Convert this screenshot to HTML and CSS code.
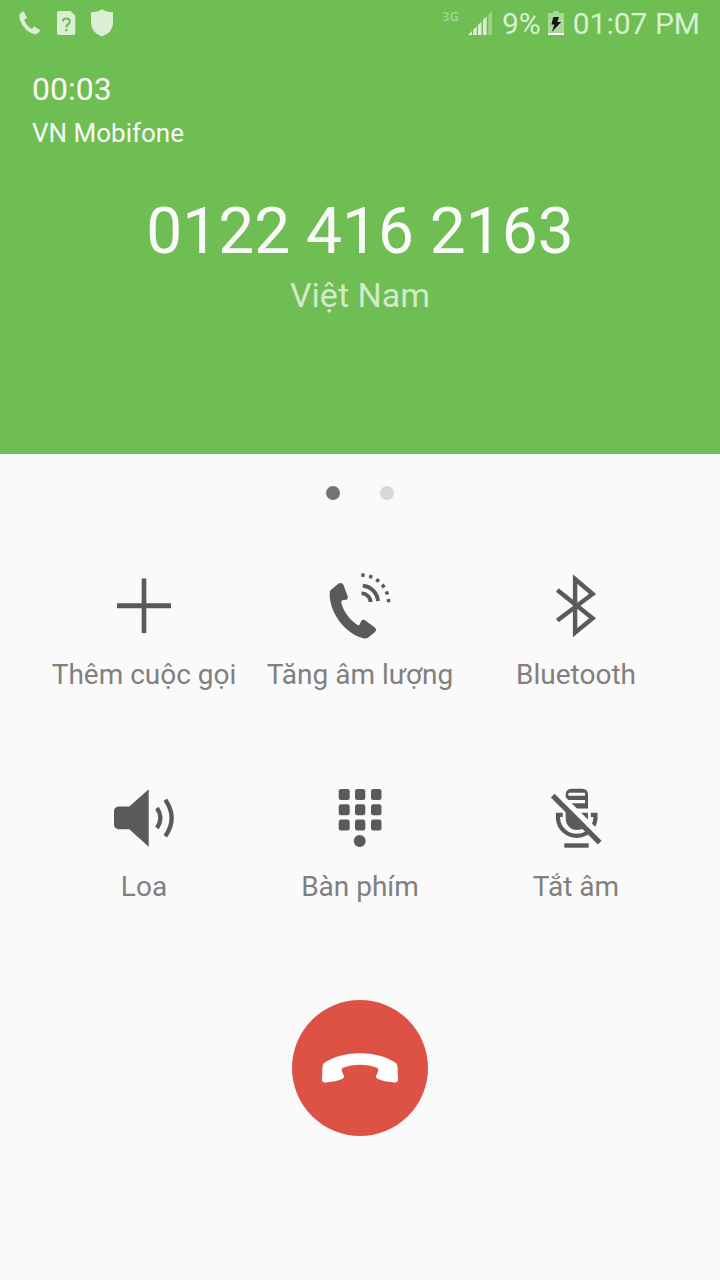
FILE: index.html
```html
<!DOCTYPE html>
<html lang="vi">
<head>
<meta charset="utf-8">
<title>VN Mobifone</title>
<link rel="stylesheet" href="styles.css">
</head>
<body>
<header class="call-header">
  <div class="status-bar">
    <div class="status-left">
      <svg class="ic-call" width="22" height="24" viewBox="0 0 22 24"><path d="M4.7 .3L8 6.7 5.2 8.7Q7 14.3 12.7 18L15.2 15.6 21.4 19.3Q18.5 23.5 15.5 23.3C7.5 21.5-.2 12 .3 3.5Q2 1 4.7.3Z"/></svg>
      <svg class="ic-sim" width="19" height="24" viewBox="0 0 19 24"><path d="M2 0H13.5L18.3 4.6V22Q18.3 24 16.3 24H2Q0 24 0 22V2Q0 0 2 0Z"/><path class="question" d="M5.8 10.5Q5.8 7.5 9.3 7.5T12.8 10.6C12.8 13 9.3 13.4 9.3 16.5M9.3 18V20.3"/></svg>
      <svg class="ic-shield" width="22" height="28" viewBox="0 0 22 28"><path d="M11 .3Q15 3.2 22 3.3V14Q22 23.5 11 27.6 0 23.5 0 14V3.3Q7 3.2 11 .3Z"/></svg>
    </div>
    <div class="status-right">
      <span class="network">3G</span>
      <svg class="ic-signal" width="24" height="24" viewBox="0 0 24 24"><path d="M0 24L4 20V24ZM5.2 18.8L8.8 15.2V24H5.2ZM10 14L13.5 10.5V24H10ZM15 9L18.6 5.4V24H15Z"/><path opacity=".4" d="M20.2 3.8L24 0V24H20.2Z"/></svg>
      <span class="percent">9%</span>
      <svg class="ic-battery" width="16" height="24" viewBox="0 0 16 24"><path opacity=".55" d="M5.3 0H10.7V2H16V22H0V2H5.3Z"/><path class="level" d="M0 22H16V24H0Z"/><path class="bolt" d="M5.3 6H11L9.3 11H13.2L3.8 21 6.4 13.5H3.4Z"/></svg>
      <span class="clock">01:07 PM</span>
    </div>
  </div>
  <div class="call-info">
    <div class="timer">00:03</div>
    <div class="carrier">VN Mobifone</div>
  </div>
  <div class="number">0122 416 2163</div>
  <div class="country">Việt Nam</div>
</header>
<main class="panel">
  <div class="pager"><span class="dot dot-active"></span><span class="dot"></span></div>
  <div class="actions">
    <button class="action">
      <svg class="icon" viewBox="0 0 96 96"><path d="M45.7 18.6H50.3V73H45.7ZM21 43.2H75V48.3H21Z"/></svg>
      <span>Thêm cuộc gọi</span>
    </button>
    <button class="action">
      <svg class="icon" viewBox="0 0 96 96"><path d="M26.5 23.6Q29.8 21.8 31.4 24.8L35.6 36.2Q36.5 39 34.2 39.7L30.5 40.2Q28.6 40.8 29.3 42.8C31.5 51 37 59.5 45.5 65Q47 66 47.8 64.2L49.2 61Q50.6 59 52.6 60L62.6 67.3Q65.3 69.7 63 72L56 77.8Q53.8 79.2 50.5 78C34 74 17 53 17.7 33Q17.7 31 18.8 30Z"/><g class="line"><path stroke-width="3.9" d="M49.5 33.4A8.8 8.8 0 0 1 58.6 42M50.8 25.8A16.5 16.5 0 0 1 66 41"/><path stroke-width="3.6" stroke-dasharray="3.4 4.5" d="M49.3 15A27.3 27.3 0 0 1 76.6 42.3"/></g></svg>
      <span>Tăng âm lượng</span>
    </button>
    <button class="action">
      <svg class="icon" viewBox="0 0 96 96"><path class="line" stroke-width="4.4" d="M29.3 30L64.6 58.3 47.1 72.6V19L64.6 34 29.3 60.5"/></svg>
      <span>Bluetooth</span>
    </button>
    <button class="action">
      <svg class="icon" viewBox="0 0 96 96"><path d="M22 34.5H33.3L52.7 17.3V74.7L33.3 57.3H22Q18 56.3 18 52.5V39.3Q18 35.5 22 34.5Z"/><path class="line" stroke-width="4.3" d="M61 36Q67.8 46 61 56M69.3 27.8Q82 46 69.3 64.2"/></svg>
      <span>Loa</span>
    </button>
    <button class="action">
      <svg class="icon" viewBox="0 0 96 96"><g><rect x="26.7" y="17" width="11" height="11" rx="2.3"/><rect x="43" y="17" width="10.3" height="11" rx="2.3"/><rect x="59" y="17" width="10.5" height="11" rx="2.3"/><rect x="26.7" y="32.2" width="11" height="11" rx="2.3"/><rect x="43" y="32.2" width="10.3" height="11" rx="2.3"/><rect x="59" y="32.2" width="10.5" height="11" rx="2.3"/><rect x="26.7" y="47.6" width="11" height="11" rx="2.3"/><rect x="43" y="47.6" width="10.3" height="11" rx="2.3"/><rect x="59" y="47.6" width="10.5" height="11" rx="2.3"/></g><circle cx="47.7" cy="69" r="6"/></svg>
      <span>Bàn phím</span>
    </button>
    <button class="action">
      <svg class="icon" viewBox="0 0 96 96"><path d="M37.7 22.7Q37.7 16.7 43.7 16.7H54Q60 16.7 60 22.7V36.5H37.7ZM37.7 36.3H46V40.7H60V46.8A11.15 11.15 0 0 1 37.7 46.8Z"/><path class="cut" d="M41.3 20.7H57V23.7H40.3V21.7ZM40.3 28H57V31.3H40.3Z"/><path class="line" stroke-width="4.2" d="M34.7 42.8H30V47A18.8 18.8 0 0 0 67.4 47V42.8H62.8"/><path d="M36.3 71.3H60.7V75.7H36.3Z"/><path class="gap" d="M28.4 20L75.4 67"/><path class="line" stroke-width="5.2" d="M24.7 23.7L71.7 70.7"/></svg>
      <span>Tắt âm</span>
    </button>
  </div>
  <button class="end-call" aria-label="Kết thúc">
    <svg width="136" height="136" viewBox="0 0 136 136"><path d="M68 53.2C82 53.2 94 56.5 104 63Q105.3 64 105.5 67L106 79Q106 82.8 102.5 82.5C97 82.3 91.5 81 86.5 79.3Q83.5 78 84 76L86.3 71Q87 68.5 85 67.7C75 63.8 61 63.8 51 67.7Q49 68.5 49.7 71L52 76Q52.5 78 49.5 79.3C44.5 81 39 82.3 33.5 82.5Q30 82.8 30 79L30.5 67Q30.7 64 32 63C42 56.5 54 53.2 68 53.2Z"/></svg>
  </button>
</main>
</body>
</html>
```

FILE: styles.css
```css
* { box-sizing: border-box; }
body {
  margin: 0;
  width: 720px;
  height: 1280px;
  background: #fafafa;
  font-family: Roboto, "Noto Sans", sans-serif;
  overflow: hidden;
}
svg { display: block; flex: none; }
button { border: 0; padding: 0; background: none; font: inherit; }

.call-header { height: 454px; background: #6ebe53; color: #fafafa; }
.status-bar {
  display: flex;
  justify-content: space-between;
  height: 48px;
  padding: 0 20px 0 19px;
  color: #dbefd5;
  fill: #dbefd5;
  font-size: 30px;
  line-height: 48px;
}
.status-left, .status-right { display: flex; align-items: flex-start; }
.ic-call { margin-top: 11px; }
.ic-sim { margin: 11px 0 0 16px; }
.question { fill: none; stroke: #6ebe53; stroke-width: 2.1; }
.ic-shield { margin: 9px 0 0 15px; }
.network {
  margin: 7px 9px 0 0;
  font: 600 13px/18px "Open Sans", sans-serif;
  color: #a3d592;
}
.ic-signal { margin: 11px 10px 0 0; }
.ic-battery { margin: 11px 9px 0 7px; }
.level { fill: #fff; }
.bolt { fill: #151515; }

.call-info { padding: 21px 32px 0; }
.timer { font-size: 32px; line-height: 40px; }
.carrier { margin-top: 4px; font-size: 26px; line-height: 40px; }
.number { margin-top: 41px; font-size: 64px; line-height: 76px; text-align: center; }
.country { margin-top: 5px; font-size: 34px; line-height: 40px; text-align: center; color: #d2eac9; }

.panel { display: flex; flex-direction: column; align-items: center; }
.pager { display: flex; gap: 40px; padding-top: 32px; }
.dot { width: 14px; height: 14px; border-radius: 50%; background: #d8d8d8; }
.dot-active { background: #737373; }
.actions {
  display: grid;
  grid-template-columns: repeat(3, 216px);
  grid-auto-rows: 212px;
  margin-top: 60px;
}
.action {
  display: flex;
  flex-direction: column;
  align-items: center;
  color: #808080;
  font-size: 28px;
  line-height: 37px;
  white-space: nowrap;
}
.icon { width: 96px; height: 96px; fill: #5a5a5a; }
.line { fill: none; stroke: #5a5a5a; stroke-miterlimit: 10; }
.cut { fill: #fafafa; }
.gap { fill: none; stroke: #fafafa; stroke-width: 5.5; }
.end-call {
  width: 136px;
  height: 136px;
  margin-top: 16px;
  border-radius: 50%;
  background: #de5246;
  fill: #fff;
}
```
